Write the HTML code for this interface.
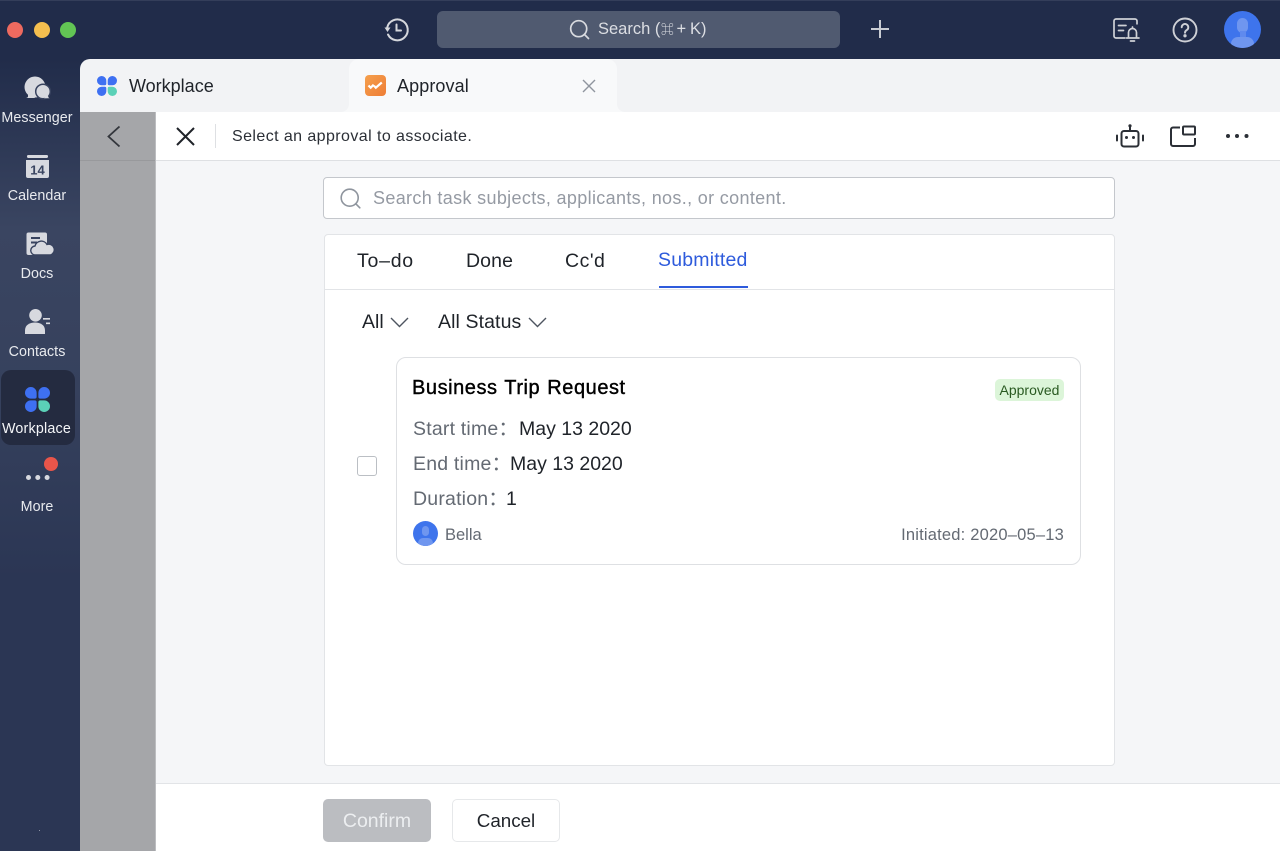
<!DOCTYPE html>
<html><head><meta charset="utf-8"><style>
html,body{margin:0;padding:0}
body{width:1280px;height:851px;position:relative;overflow:hidden;background:#212c4a;font-family:"Liberation Sans","Noto Sans CJK SC",sans-serif}
.a{position:absolute}
.t{position:absolute;white-space:nowrap;line-height:20px}
.nav{position:absolute;left:0;width:74px;text-align:center;color:#e8eaee;font-size:14.3px;line-height:18px;white-space:nowrap;letter-spacing:.05px}
svg{position:absolute;overflow:visible}
</style></head><body>
<div class="a" style="left:0;top:59px;width:80px;height:792px;background:linear-gradient(#212c4a 0,#3a4561 170px,#36415d 330px,#2b3654 520px,#2b3654 100%)"></div>
<div class="a" style="left:0;top:0;width:1280px;height:1px;background:#343e5a"></div>

<div class="a" style="left:7px;top:22px;width:16px;height:16px;border-radius:50%;background:#ee6a5f"></div>
<div class="a" style="left:34px;top:22px;width:16px;height:16px;border-radius:50%;background:#f5bf4f"></div>
<div class="a" style="left:60px;top:22px;width:16px;height:16px;border-radius:50%;background:#62c554"></div>

<!-- history -->
<svg style="left:383px;top:17px" width="26" height="26" viewBox="0 0 26 26" fill="none" stroke="#d5d7dc" stroke-width="2"><path d="M4.2 10.5A10.4 10.4 0 1 1 5 17.5" stroke-linecap="round"/><path d="M1.5 10.5h6L4.5 15z" fill="#d5d7dc" stroke="none"/><path d="M13.5 7.5v6h4.500" stroke-linecap="round"/></svg>
<!-- search bar -->
<div class="a" style="left:437px;top:11px;width:403px;height:37px;border-radius:6px;background:#505a70"></div>
<svg style="left:569px;top:19px" width="21" height="21" viewBox="0 0 21 21" fill="none" stroke="#d9dbe0" stroke-width="1.7"><circle cx="9.7" cy="9.7" r="8"/><path d="M15.5 15.5l4 4" stroke-linecap="round"/></svg>
<div class="t" style="left:598px;top:19px;font-size:16.5px;color:#dcdee3">Search (<span style="font-size:13px;margin-left:.5px">⌘</span></div>
<div class="t" style="left:676.500px;top:19px;font-size:16.5px;color:#dcdee3">+</div>
<div class="t" style="left:690px;top:19px;font-size:16.500px;color:#dcdee3">K)</div>
<svg style="left:871px;top:20px" width="18" height="18" fill="none" stroke="#c9ccd3" stroke-width="2"><path d="M0 9h18M9 0v18"/></svg>
<!-- top right -->
<svg style="left:1113px;top:18px" width="27" height="25" viewBox="0 0 27 25" fill="none" stroke="#ced0d6" stroke-width="1.7"><path d="M24 6.500V3a2 2 0 0 0-2-2H3a2 2 0 0 0-2 2v15a2 2 0 0 0 2 2h9.500"/><path d="M5.500 7.500h7.500M5.500 12.500h5" stroke-linecap="round"/><path d="M13.500 20h12.500M15.500 20v-5.500a4 4 0 0 1 8 0v5.500M17.500 23h4M19.500 10.500v-1.500" stroke-linecap="round"/></svg>
<svg style="left:1172px;top:17px" width="26" height="26" viewBox="0 0 26 26" fill="none" stroke="#ced0d6" stroke-width="1.9"><circle cx="13" cy="13" r="11.5"/><path d="M9.7 10.3a3.3 3.3 0 1 1 5 2.8c-1.100.7-1.700 1.200-1.700 2.600" stroke-linecap="round"/><circle cx="13" cy="18.8" r=".7" fill="#ced0d6"/></svg>
<div class="a" style="left:1224px;top:11px;width:37px;height:37px;border-radius:50%;background:#3e74ec;overflow:hidden">
<div class="a" style="left:13px;top:7px;width:11px;height:15px;border-radius:6px;background:#6f96ef"></div>
<div class="a" style="left:15.500px;top:20px;width:6px;height:8px;background:#5f8aee"></div>
<div class="a" style="left:7px;top:26px;width:23px;height:14px;border-radius:7px 7px 0 0;background:#6f96ef"></div></div>

<!-- tabs strip -->
<div class="a" style="left:80px;top:59px;width:1200px;height:53px;background:#f2f3f5;border-radius:10px 0 0 0"></div>
<div class="a" style="left:341px;top:104px;width:8px;height:8px;background:#f8f9fa"></div>
<div class="a" style="left:341px;top:104px;width:8px;height:8px;background:#f2f3f5;border-radius:0 0 8px 0"></div>
<div class="a" style="left:617px;top:104px;width:8px;height:8px;background:#f8f9fa"></div>
<div class="a" style="left:617px;top:104px;width:8px;height:8px;background:#f2f3f5;border-radius:0 0 0 8px"></div>
<div class="a" style="left:349px;top:59px;width:268px;height:53px;background:#f8f9fa;border-radius:10px 10px 0 0"></div>
<svg style="left:97px;top:76px" width="20" height="20" viewBox="0 0 20 20"><g fill="#3e70f2"><path d="M4.650 0A4.650 4.650 0 0 1 9.300 4.650V7.800a1.500 1.500 0 0 1-1.500 1.500H4.650A4.650 4.650 0 0 1 4.650 0z"/><path transform="rotate(90 10 10)" d="M4.650 0A4.650 4.650 0 0 1 9.300 4.650V7.800a1.500 1.500 0 0 1-1.500 1.500H4.650A4.650 4.650 0 0 1 4.650 0z"/><path transform="rotate(270 10 10)" d="M4.650 0A4.650 4.650 0 0 1 9.300 4.650V7.800a1.500 1.500 0 0 1-1.500 1.500H4.650A4.650 4.650 0 0 1 4.650 0z"/></g><path fill="#5bd1b7" transform="rotate(180 10 10)" d="M4.650 0A4.650 4.650 0 0 1 9.300 4.650V7.800a1.500 1.500 0 0 1-1.500 1.500H4.650A4.650 4.650 0 0 1 4.650 0z"/></svg>
<div class="t" style="left:129px;top:76px;font-size:18px;color:#1f2329">Workplace</div>
<div class="a" style="left:365px;top:75px;width:21px;height:21px;border-radius:4px;background:linear-gradient(135deg,#f5a04d,#ee7d35)"></div>
<svg style="left:367px;top:81px" width="18" height="10" viewBox="0 0 18 10" fill="none" stroke="#fff" stroke-width="2.200"><path d="M1.500 4.500l2.200 2.200 3-3M7 4.800l1.800 1.900 6-5.200"/></svg>
<div class="t" style="left:397px;top:76px;font-size:18px;color:#1f2329;letter-spacing:.1px">Approval</div>
<svg style="left:582px;top:79px" width="14" height="14" fill="none" stroke="#8f959e" stroke-width="1.400"><path d="M1 1l12 12M13 1L1 13"/></svg>

<!-- gray panel -->
<div class="a" style="left:80px;top:112px;width:75px;height:739px;background:#a5a6a9;border-right:1px solid #bcbdc0"></div>
<div class="a" style="left:80px;top:160px;width:75px;height:1px;background:#98999c"></div>
<svg style="left:107px;top:125px" width="14" height="23" fill="none" stroke="#33363c" stroke-width="1.800"><path d="M12.500 1.500L1.500 11.500l11 10"/></svg>

<!-- header -->
<div class="a" style="left:156px;top:112px;width:1124px;height:48px;background:#fff"></div>
<div class="a" style="left:156px;top:160px;width:1124px;height:1px;background:#dee0e3"></div>
<div class="a" style="left:156px;top:161px;width:1124px;height:622px;background:#f5f6f8"></div>
<svg style="left:176px;top:127px" width="19" height="19" fill="none" stroke="#1f2329" stroke-width="2"><path d="M1 1l17 17M18 1L1 18"/></svg>
<div class="a" style="left:215px;top:124px;width:1px;height:24px;background:#dee0e3"></div>
<div class="t" style="left:232px;top:127px;font-size:16px;color:#2b2f36;letter-spacing:.42px">Select an approval to associate.</div>
<!-- robot -->
<svg style="left:1116px;top:124px" width="28" height="24" viewBox="0 0 28 24" fill="none" stroke="#2b2f36" stroke-width="2"><rect x="5.500" y="7" width="17" height="15.500" rx="2.500"/><path d="M14 7V2"/><circle cx="14" cy="1.800" r="1.600" fill="#2b2f36" stroke="none"/><path d="M1 11.500v5M27 11.500v5" stroke-linecap="round"/><circle cx="10.500" cy="13.500" r="1.500" fill="#2b2f36" stroke="none"/><circle cx="17.500" cy="13.500" r="1.500" fill="#2b2f36" stroke="none"/></svg>
<!-- window -->
<svg style="left:1170px;top:125px" width="26" height="22" viewBox="0 0 26 22" fill="none" stroke="#2b2f36" stroke-width="2"><path d="M10 2.500H3a2 2 0 0 0-2 2v14.500a2 2 0 0 0 2 2h20a2 2 0 0 0 2-2v-6"/><rect x="13" y="1.500" width="12" height="8" rx="1"/></svg>
<div class="a" style="left:1226px;top:134px;width:4px;height:4px;border-radius:50%;background:#2b2f36;box-shadow:9px 0 #2b2f36,18.500px 0 #2b2f36"></div>

<!-- search -->
<div class="a" style="left:323px;top:177px;width:790px;height:40px;background:#fff;border:1px solid #c4c7cc;border-radius:4px"></div>
<svg style="left:340px;top:188px" width="21" height="21" viewBox="0 0 21 21" fill="none" stroke="#8f959e" stroke-width="1.600"><circle cx="9.700" cy="9.700" r="8.500"/><path d="M15.800 15.800l4 4" stroke-linecap="round"/></svg>
<div class="t" style="left:373px;top:188px;font-size:18px;color:#959aa3;letter-spacing:.34px">Search task subjects, applicants, nos., or content.</div>

<!-- panel -->
<div class="a" style="left:324px;top:234px;width:789px;height:530px;background:#fff;border:1px solid #e2e4e7;border-radius:4px"></div>
<div class="a" style="left:325px;top:288.500px;width:789px;height:1px;background:#e2e4e7"></div>
<div class="t" style="left:357px;top:251px;font-size:19.500px;color:#1f2329;letter-spacing:.75px">To–do</div>
<div class="t" style="left:466px;top:251px;font-size:19.500px;color:#1f2329;letter-spacing:.1px">Done</div>
<div class="t" style="left:565px;top:251px;font-size:19.500px;color:#1f2329;letter-spacing:.5px">Cc'd</div>
<div class="t" style="left:658px;top:250px;font-size:19.500px;color:#2e5bdc;letter-spacing:.2px">Submitted</div>
<div class="a" style="left:659px;top:285.500px;width:89px;height:2.500px;background:#2e5bdc"></div>
<div class="t" style="left:362px;top:312px;font-size:19.500px;color:#1f2329">All</div>
<svg style="left:390px;top:317px" width="19" height="11" fill="none" stroke="#4e5560" stroke-width="1.400"><path d="M1 1l8.500 8.500L18 1"/></svg>
<div class="t" style="left:438px;top:312px;font-size:19.500px;color:#1f2329;letter-spacing:.1px">All Status</div>
<svg style="left:528px;top:317px" width="19" height="11" fill="none" stroke="#4e5560" stroke-width="1.400"><path d="M1 1l8.500 8.500L18 1"/></svg>

<!-- checkbox -->
<div class="a" style="left:357px;top:456px;width:18px;height:18px;background:#fff;border:1px solid #bbbfc4;border-radius:3px"></div>

<!-- card -->
<div class="a" style="left:396px;top:357px;width:683px;height:206px;background:#fff;border:1px solid #dee0e3;border-radius:10px"></div>
<div class="t" style="left:412px;top:378px;font-size:20px;color:#000;-webkit-text-stroke:.4px #000;letter-spacing:.55px;word-spacing:1px">Business Trip Request</div>
<div class="a" style="left:995px;top:379px;width:69px;height:22px;background:#dcf5d9;border-radius:5px"></div>
<div class="t" style="left:999.500px;top:380px;font-size:14px;color:#2a5a22">Approved</div>
<div class="t" style="left:413px;top:419px;font-size:19.500px;color:#646a73;letter-spacing:.2px">Start time：</div>
<div class="t" style="left:519px;top:419px;font-size:19.500px;color:#1f2329">May 13 2020</div>
<div class="t" style="left:413px;top:454px;font-size:19.500px;color:#646a73;letter-spacing:.2px">End time：</div>
<div class="t" style="left:510px;top:454px;font-size:19.500px;color:#1f2329">May 13 2020</div>
<div class="t" style="left:413px;top:489px;font-size:19.500px;color:#646a73;letter-spacing:.2px">Duration：</div>
<div class="t" style="left:506px;top:489px;font-size:19.500px;color:#1f2329">1</div>
<div class="a" style="left:413px;top:521px;width:25px;height:25px;border-radius:50%;background:#3e74ec;overflow:hidden">
<div class="a" style="left:9px;top:5px;width:7px;height:10px;border-radius:4px;background:#6f96ef"></div>
<div class="a" style="left:5px;top:17px;width:15px;height:10px;border-radius:5px 5px 0 0;background:#6f96ef"></div></div>
<div class="t" style="left:445px;top:525px;font-size:16.500px;color:#646a73">Bella</div>
<div class="t" style="right:216px;top:525px;font-size:16.500px;color:#646a73;letter-spacing:.2px">Initiated: 2020–05–13</div>

<!-- footer -->
<div class="a" style="left:156px;top:783px;width:1124px;height:68px;background:#fff;border-top:1px solid #e2e4e7;box-sizing:border-box"></div>
<div class="a" style="left:323px;top:799px;width:108px;height:43px;background:#bbbdc1;border-radius:5px"></div>
<div class="t" style="left:323px;top:811px;width:108px;text-align:center;font-size:19.500px;color:#eceef0">Confirm</div>
<div class="a" style="left:452px;top:799px;width:106px;height:41px;background:#fff;border:1px solid #e6e8ea;border-radius:5px"></div>
<div class="t" style="left:452px;top:811px;width:108px;text-align:center;font-size:18.800px;color:#1f2329">Cancel</div>

<!-- sidebar -->
<svg style="left:24px;top:76px" width="27" height="24" viewBox="0 0 27 24"><circle cx="11" cy="11" r="10.500" fill="#d7d9df"/><path d="M4 15v5.500c0 .8-.8 1.300-2 1.500h9z" fill="#d7d9df"/><circle cx="19" cy="15.500" r="7.300" fill="#d7d9df" stroke="#38435f" stroke-width="1.500"/><path d="M20 22.300h5.700c-1.200-.5-1.700-1.500-1.700-2.800z" fill="#d7d9df"/></svg>
<div class="nav" style="top:109px">Messenger</div>
<svg style="left:26px;top:155px" width="23" height="23" viewBox="0 0 23 23"><rect x="1" y="0" width="21" height="3" rx="1.200" fill="#d7d9df"/><path d="M0 5h23v16a2 2 0 0 1-2 2H2a2 2 0 0 1-2-2z" fill="#d7d9df"/><text x="11.500" y="19.500" font-family="Liberation Sans" font-size="13" font-weight="700" text-anchor="middle" fill="#3a4561">14</text></svg>
<div class="nav" style="top:187px">Calendar</div>
<svg style="left:26px;top:232px" width="26" height="24" viewBox="0 0 26 24"><rect x="0.500" y="0.500" width="20.500" height="22.500" rx="2" fill="#d7d9df"/><path d="M5 5h9v2H5zM5 9.500h6v2H5z" fill="#38435f"/><path d="M9.500 23a4.500 4.500 0 0 1-.5-9 6.500 6.500 0 0 1 12-1.500 5.300 5.300 0 0 1 3.500 10.500z" fill="#d7d9df" stroke="#38435f" stroke-width="1.400"/></svg>
<div class="nav" style="top:265px">Docs</div>
<svg style="left:25px;top:309px" width="26" height="25" viewBox="0 0 26 25"><circle cx="10.500" cy="6.300" r="6.300" fill="#d7d9df"/><path d="M0 25v-3.500C0 16 4.500 13.500 10 13.500s10 2.500 10 8V25z" fill="#d7d9df"/><path d="M18 9h7v1.600h-7zM21 13.500h4v1.600h-4z" fill="#d7d9df"/></svg>
<div class="nav" style="top:343px">Contacts</div>
<div class="a" style="left:1px;top:370px;width:74px;height:75px;border-radius:10px;background:#242b40"></div>
<svg style="left:25px;top:387px" width="25" height="25" viewBox="0 0 20 20"><g fill="#3e70f2"><path d="M4.650 0A4.650 4.650 0 0 1 9.300 4.650V7.800a1.500 1.500 0 0 1-1.500 1.500H4.650A4.650 4.650 0 0 1 4.650 0z"/><path transform="rotate(90 10 10)" d="M4.650 0A4.650 4.650 0 0 1 9.300 4.650V7.800a1.500 1.500 0 0 1-1.500 1.500H4.650A4.650 4.650 0 0 1 4.650 0z"/><path transform="rotate(270 10 10)" d="M4.650 0A4.650 4.650 0 0 1 9.300 4.650V7.800a1.500 1.500 0 0 1-1.500 1.500H4.650A4.650 4.650 0 0 1 4.650 0z"/></g><path fill="#5bd1b7" transform="rotate(180 10 10)" d="M4.650 0A4.650 4.650 0 0 1 9.300 4.650V7.800a1.500 1.500 0 0 1-1.500 1.500H4.650A4.650 4.650 0 0 1 4.650 0z"/></svg>
<div class="nav" style="top:420px;color:#f5f6f8;left:0;width:73px;letter-spacing:.2px">Workplace</div>
<div class="a" style="left:44px;top:457px;width:14px;height:14px;border-radius:50%;background:#e9554a"></div>
<div class="a" style="left:26px;top:475px;width:5px;height:5px;border-radius:50%;background:#d7d9df;box-shadow:9.300px 0 #d7d9df,18.600px 0 #d7d9df"></div>
<div class="nav" style="top:498px">More</div>
<div class="a" style="left:39px;top:830px;width:1px;height:1px;background:#8d94a6"></div>
</body></html>
